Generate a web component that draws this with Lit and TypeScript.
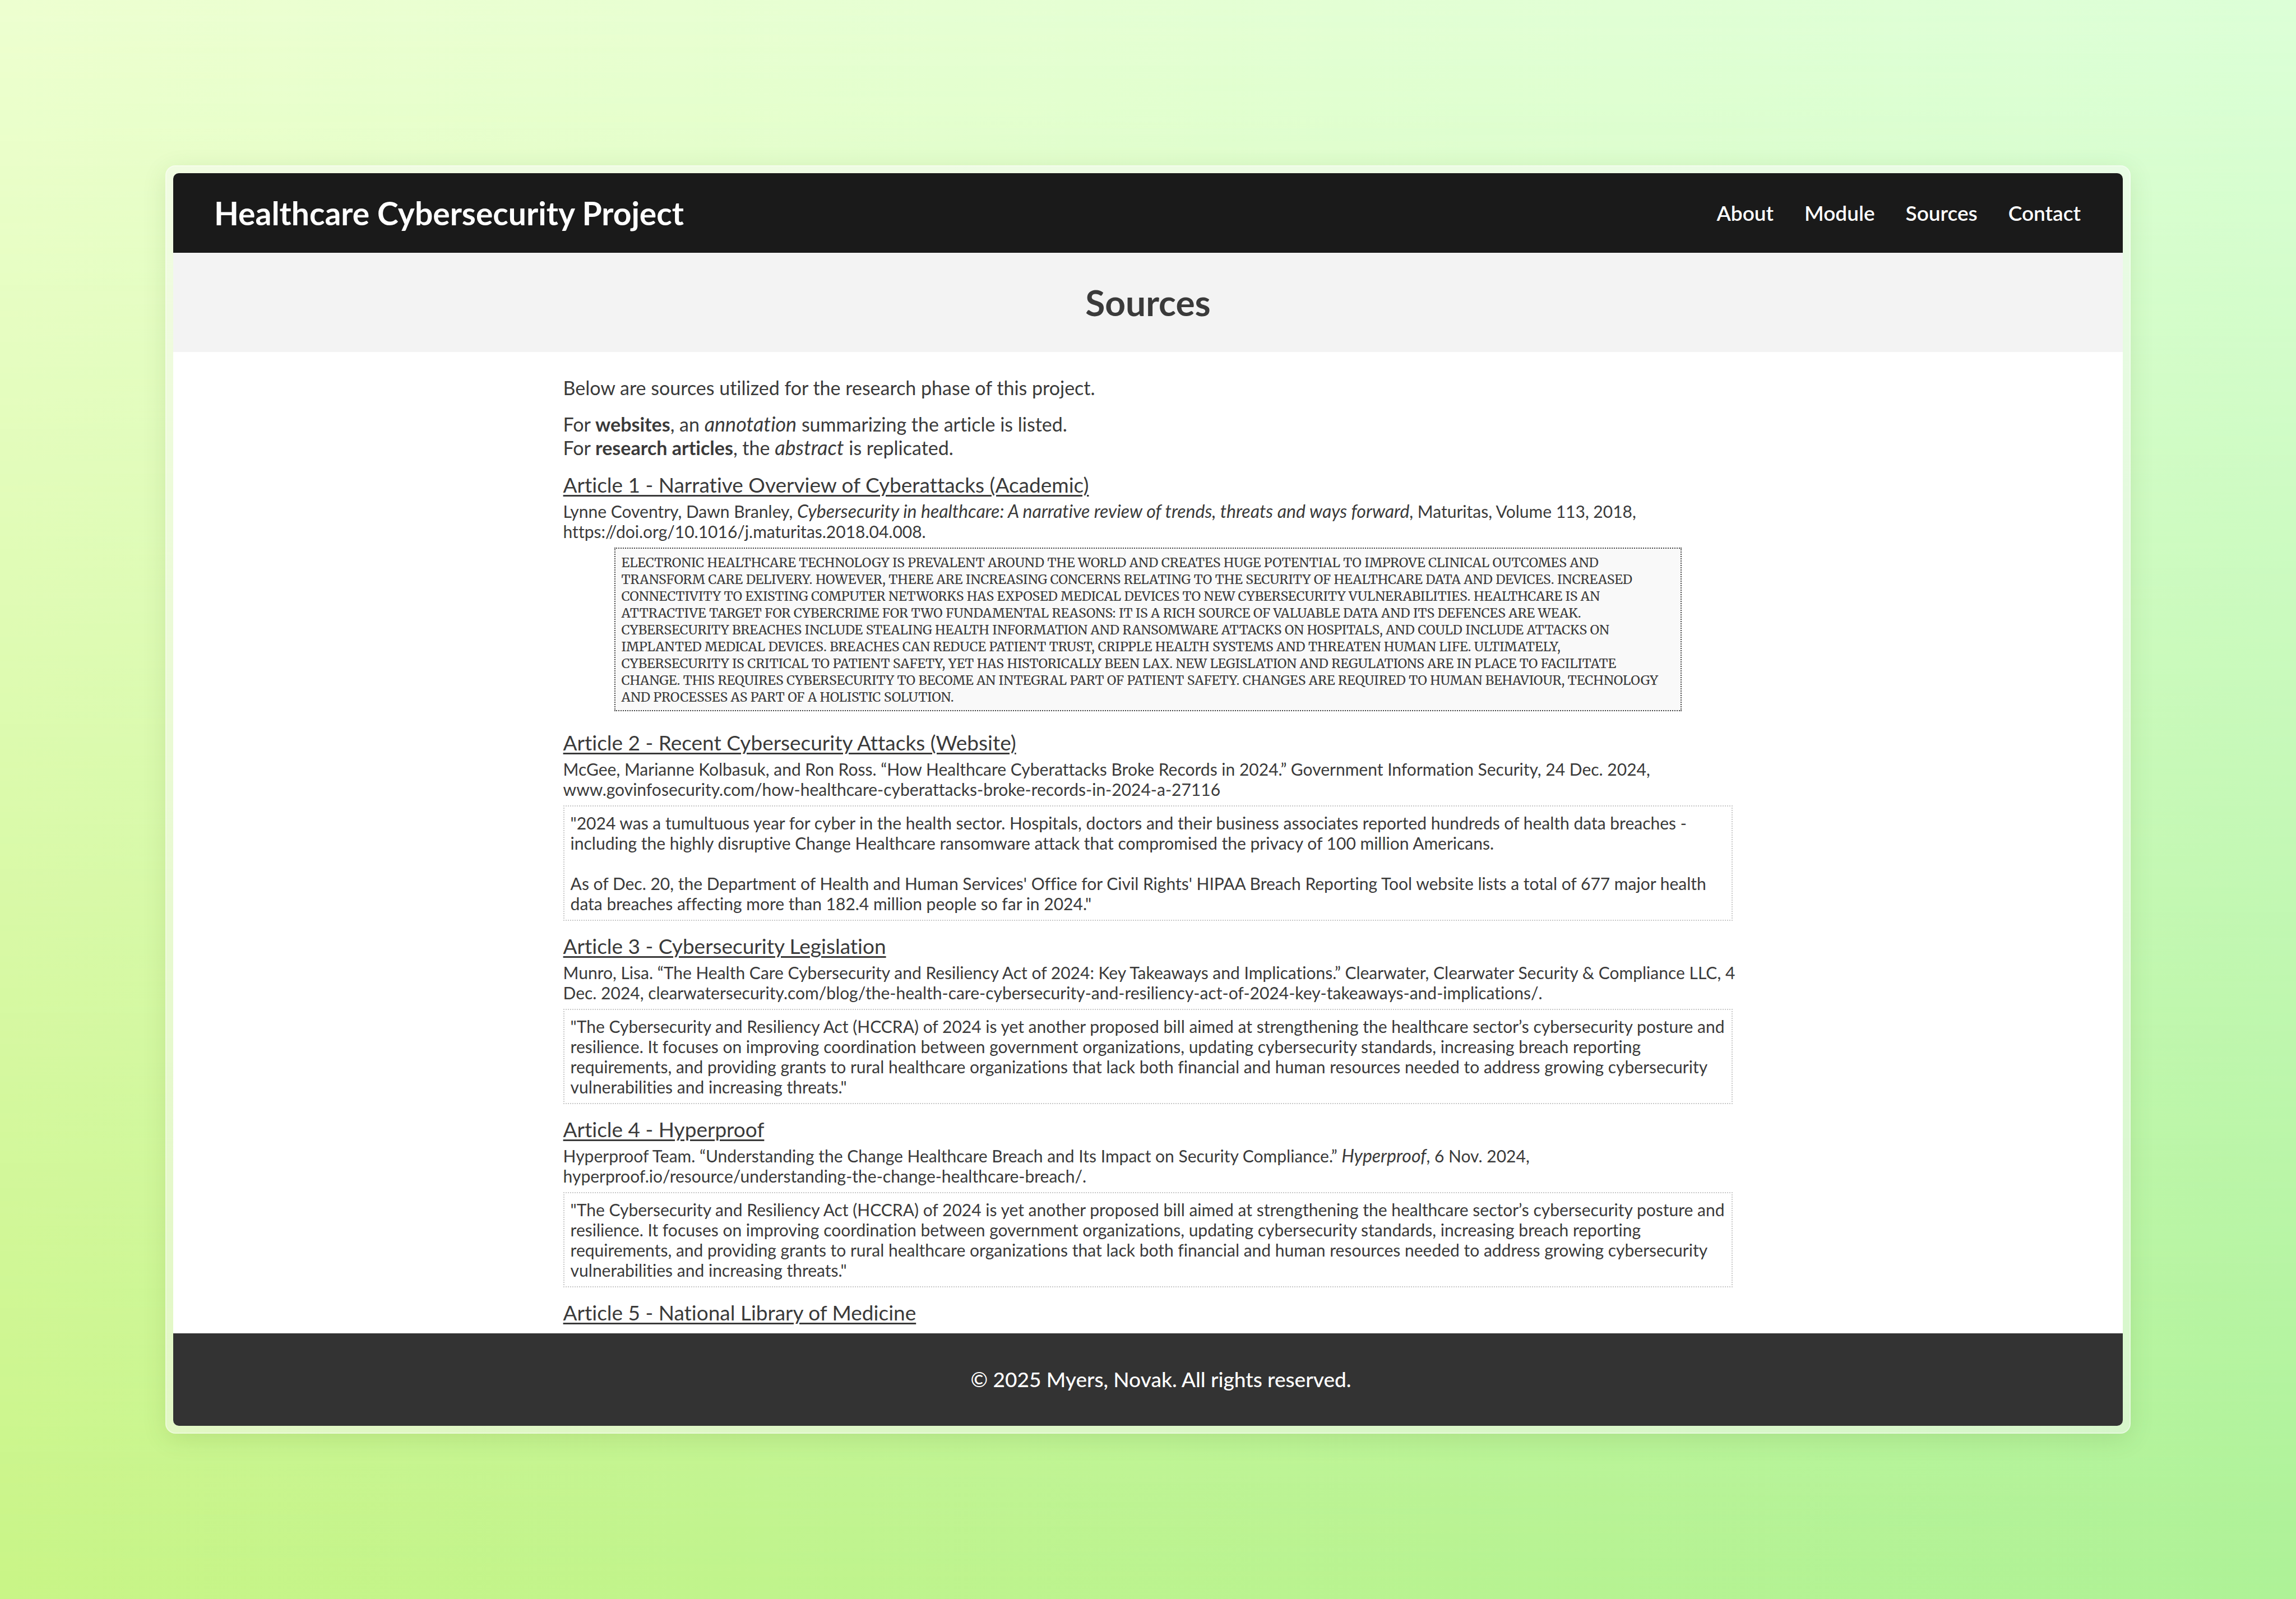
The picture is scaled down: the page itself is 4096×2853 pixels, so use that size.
import { LitElement, html, css, type TemplateResult } from "lit";
import { customElement, property } from "lit/decorators.js";
import { classMap } from "lit/directives/class-map.js";

interface Source {
  title: string;
  citation?: TemplateResult;
  kind?: "abstract" | "annotation";
  body?: TemplateResult;
}

const hccra = html`"The Cybersecurity and Resiliency Act (HCCRA) of 2024 is yet another proposed bill
aimed at strengthening the healthcare sector’s cybersecurity posture and resilience. It focuses on
improving coordination between government organizations, updating cybersecurity standards,
increasing breach reporting requirements, and providing grants to rural healthcare organizations
that lack both financial and human resources needed to address growing cybersecurity
vulnerabilities and increasing threats."`;

const SOURCES: Source[] = [
  {
    title: "Article 1 - Narrative Overview of Cyberattacks (Academic)",
    citation: html`Lynne Coventry, Dawn Branley, <em>Cybersecurity in healthcare: A narrative review of
      trends, threats and ways forward</em>, Maturitas, Volume 113, 2018,
      <br />https://doi.org/10.1016/j.maturitas.2018.04.008.`,
    kind: "abstract",
    body: html`ELECTRONIC HEALTHCARE TECHNOLOGY IS PREVALENT AROUND THE WORLD AND CREATES HUGE
      POTENTIAL TO IMPROVE CLINICAL OUTCOMES AND TRANSFORM CARE DELIVERY. HOWEVER, THERE ARE
      INCREASING CONCERNS RELATING TO THE SECURITY OF HEALTHCARE DATA AND DEVICES. INCREASED
      CONNECTIVITY TO EXISTING COMPUTER NETWORKS HAS EXPOSED MEDICAL DEVICES TO NEW CYBERSECURITY
      VULNERABILITIES. HEALTHCARE IS AN ATTRACTIVE TARGET FOR CYBERCRIME FOR TWO FUNDAMENTAL
      REASONS: IT IS A RICH SOURCE OF VALUABLE DATA AND ITS DEFENCES ARE WEAK. CYBERSECURITY
      BREACHES INCLUDE STEALING HEALTH INFORMATION AND RANSOMWARE ATTACKS ON HOSPITALS, AND COULD
      INCLUDE ATTACKS ON IMPLANTED MEDICAL DEVICES. BREACHES CAN REDUCE PATIENT TRUST, CRIPPLE
      HEALTH SYSTEMS AND THREATEN HUMAN LIFE. ULTIMATELY, CYBERSECURITY IS CRITICAL TO PATIENT
      SAFETY, YET HAS HISTORICALLY BEEN LAX. NEW LEGISLATION AND REGULATIONS ARE IN PLACE TO
      FACILITATE CHANGE. THIS REQUIRES CYBERSECURITY TO BECOME AN INTEGRAL PART OF PATIENT SAFETY.
      CHANGES ARE REQUIRED TO HUMAN BEHAVIOUR, TECHNOLOGY AND PROCESSES AS PART OF A HOLISTIC
      SOLUTION.`,
  },
  {
    title: "Article 2 - Recent Cybersecurity Attacks (Website)",
    citation: html`McGee, Marianne Kolbasuk, and Ron Ross. “How Healthcare Cyberattacks Broke Records
      in 2024.” Government Information Security, 24 Dec. 2024,
      <br />www.govinfosecurity.com/how-healthcare-cyberattacks-broke-records-in-2024-a-27116`,
    kind: "annotation",
    body: html`"2024 was a tumultuous year for cyber in the health sector. Hospitals, doctors and
      their business associates reported hundreds of health data breaches - including the highly
      disruptive Change Healthcare ransomware attack that compromised the privacy of 100 million
      Americans.<br /><br />As of Dec. 20, the Department of Health and Human Services' Office for
      Civil Rights' HIPAA Breach Reporting Tool website lists a total of 677 major health data
      breaches affecting more than 182.4 million people so far in 2024."`,
  },
  {
    title: "Article 3 - Cybersecurity Legislation",
    citation: html`Munro, Lisa. “The Health Care Cybersecurity and Resiliency Act of 2024: Key
      Takeaways and Implications.” Clearwater, Clearwater Security &amp; Compliance LLC, 4
      <br />Dec. 2024,
      clearwatersecurity.com/blog/the-health-care-cybersecurity-and-resiliency-act-of-2024-key-takeaways-and-implications/.`,
    kind: "annotation",
    body: hccra,
  },
  {
    title: "Article 4 - Hyperproof",
    citation: html`Hyperproof Team. “Understanding the Change Healthcare Breach and Its Impact on
      Security Compliance.” <em>Hyperproof</em>, 6 Nov. 2024,
      <br />hyperproof.io/resource/understanding-the-change-healthcare-breach/.`,
    kind: "annotation",
    body: hccra,
  },
  { title: "Article 5 - National Library of Medicine" },
];

@customElement("source-entry")
export class SourceEntry extends LitElement {
  @property({ attribute: false }) source!: Source;

  static styles = css`
    :host {
      display: block;
    }
    .title {
      margin: 0;
      font-size: 37px;
      line-height: 44px;
      font-weight: 400;
      text-decoration: underline;
      text-decoration-thickness: 3px;
      text-underline-offset: 4px;
    }
    .citation {
      margin: 7px 0 11px;
      font-size: 30px;
      line-height: 36px;
      white-space: nowrap;
    }
    .citation em {
      font-size: 32px;
      line-height: 1;
    }
    .note {
      box-sizing: border-box;
      margin: 0;
      font-size: 30px;
      line-height: 36px;
    }
    .annotation {
      padding: 11px 4px 11px 11px;
      border: 2px dotted #c8c8c8;
    }
    .abstract {
      margin: 0 91px 11px;
      padding: 10px 24px 8px 11px;
      border: 2px dotted #444;
      background: #f9f9f9;
      font-family: Merriweather, "DejaVu Serif Condensed", serif;
      font-size: 23px;
      line-height: 30px;
    }
  `;

  render() {
    const { title, citation, kind, body } = this.source;
    return html`
      <h2 class="title">${title}</h2>
      ${citation ? html`<p class="citation">${citation}</p>` : null}
      ${body
        ? html`<blockquote
            class=${classMap({
              note: true,
              abstract: kind === "abstract",
              annotation: kind === "annotation",
            })}
          >${body}</blockquote>`
        : null}
    `;
  }
}

@customElement("app-root")
export class AppRoot extends LitElement {
  static styles = css`
    :host {
      position: relative;
      isolation: isolate;
      box-sizing: border-box;
      display: flex;
      min-height: 100vh;
      padding: 295px;
      background: linear-gradient(to right, #c9f587, #aef297);
      color: #3a3a3a;
      font-family: Lato, sans-serif;
      font-variant-ligatures: no-common-ligatures;
    }
    :host::before {
      content: "";
      position: absolute;
      inset: 0;
      z-index: -1;
      background: linear-gradient(to right, #edffd0, #dcffd7);
      mask-image: linear-gradient(to bottom, #000, transparent);
    }
    .frame {
      flex: 1;
      display: flex;
      min-width: 0;
      padding: 12px;
      border: 2px solid rgba(255, 255, 255, 0.35);
      border-radius: 18px;
      background: rgba(250, 250, 250, 0.5);
      box-shadow: 0 10px 44px rgba(60, 90, 20, 0.12);
    }
    .page {
      flex: 1;
      display: flex;
      flex-direction: column;
      min-width: 0;
      overflow: hidden;
      border-radius: 10px;
      background: #fff;
    }
    .bar {
      display: flex;
      align-items: center;
      justify-content: space-between;
      padding: 37px 75px 37px 73px;
      background: #1a1a1a;
      color: #fff;
    }
    .brand {
      font-size: 57px;
      line-height: 68px;
      font-weight: 700;
    }
    .links {
      display: flex;
      gap: 55px;
    }
    .link {
      color: inherit;
      font-size: 37px;
      line-height: 44px;
      font-weight: 600;
      text-decoration: none;
    }
    .heading {
      margin: 0;
      padding: 50px 73px;
      background: #f3f3f3;
      font-size: 64px;
      line-height: 77px;
      font-weight: 700;
      text-align: center;
    }
    .content {
      flex: 1;
      box-sizing: border-box;
      display: flex;
      flex-direction: column;
      gap: 23px;
      width: 60%;
      margin: 0 auto;
      padding-top: 43px;
    }
    .intro {
      margin: 0;
      font-size: 34px;
      line-height: 42px;
    }
    .intro em {
      font-size: 36px;
      line-height: 1;
    }
    .footer {
      padding: 60px 0 61px 46px;
      background: #333;
      color: #fff;
      font-size: 37px;
      line-height: 44px;
      font-weight: 500;
      text-align: center;
    }
    .copyright {
      margin: 0;
    }
  `;

  render() {
    return html`
      <div class="frame">
        <div class="page">
          <header class="bar">
            <div class="brand">Healthcare Cybersecurity Project</div>
            <nav class="links">
              ${["About", "Module", "Sources", "Contact"].map(
                (name) => html`<a class="link" href="#${name.toLowerCase()}">${name}</a>`,
              )}
            </nav>
          </header>
          <h1 class="heading">Sources</h1>
          <main class="content">
            <p class="intro">Below are sources utilized for the research phase of this project.</p>
            <p class="intro">
              For <strong>websites</strong>, an <em>annotation</em> summarizing the article is
              listed.<br />For <strong>research articles</strong>, the <em>abstract</em> is
              replicated.
            </p>
            ${SOURCES.map((s) => html`<source-entry .source=${s}></source-entry>`)}
          </main>
          <footer class="footer">
            <p class="copyright">© 2025 Myers, Novak. All rights reserved.</p>
          </footer>
        </div>
      </div>
    `;
  }
}
